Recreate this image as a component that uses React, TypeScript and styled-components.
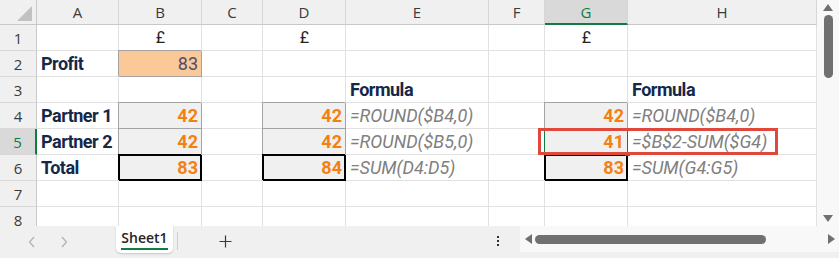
import React from 'react';
import styled, { createGlobalStyle, css } from 'styled-components';

const Global = createGlobalStyle`
  html, body { margin: 0; padding: 0; background: #fff; }
  body { width: 839px; height: 258px; overflow: hidden; font-family: "Open Sans", "Noto Sans", sans-serif; }
  * { box-sizing: border-box; }
`;

type Kind = 'plain' | 'currency' | 'label' | 'heading' | 'profit' | 'num' | 'total' | 'formula';
type CellData = { text: string; kind: Kind; selected?: boolean };

const COLS = ['A', 'B', 'C', 'D', 'E', 'F', 'G', 'H'];
const ROW_COUNT = 8;
const ACTIVE_COL = 'G';
const ACTIVE_ROW = 5;
const GREEN = '#107c41';

const SHEET: Record<number, Record<string, CellData>> = {
  1: {
    B: { text: '£', kind: 'currency' },
    D: { text: '£', kind: 'currency' },
    G: { text: '£', kind: 'currency' },
  },
  2: {
    A: { text: 'Profit', kind: 'label' },
    B: { text: '83', kind: 'profit' },
  },
  3: {
    E: { text: 'Formula', kind: 'heading' },
    H: { text: 'Formula', kind: 'heading' },
  },
  4: {
    A: { text: 'Partner 1', kind: 'label' },
    B: { text: '42', kind: 'num' },
    D: { text: '42', kind: 'num' },
    E: { text: '=ROUND($B4,0)', kind: 'formula' },
    G: { text: '42', kind: 'num' },
    H: { text: '=ROUND($B4,0)', kind: 'formula' },
  },
  5: {
    A: { text: 'Partner 2', kind: 'label' },
    B: { text: '42', kind: 'num' },
    D: { text: '42', kind: 'num' },
    E: { text: '=ROUND($B5,0)', kind: 'formula' },
    G: { text: '41', kind: 'num', selected: true },
    H: { text: '=$B$2-SUM($G4)', kind: 'formula' },
  },
  6: {
    A: { text: 'Total', kind: 'label' },
    B: { text: '83', kind: 'total' },
    D: { text: '84', kind: 'total' },
    E: { text: '=SUM(D4:D5)', kind: 'formula' },
    G: { text: '83', kind: 'total' },
    H: { text: '=SUM(G4:G5)', kind: 'formula' },
  },
};

// Grid track index of a sheet column / row (track 1 holds the headers)
const colTrack = (c: string) => COLS.indexOf(c) + 2;
const rowTrack = (r: number) => r + 1;

const Window = styled.div`
  width: 839px;
  height: 258px;
  display: flex;
  flex-direction: column;
  background: #f0f0f0;
  overflow: hidden;
`;

const Body = styled.div`
  display: flex;
  flex: 0 0 226px;
  height: 226px;
`;

const Grid = styled.div`
  flex: 0 0 817px;
  display: grid;
  grid-template-columns: 37px 82px 83px 61px 83px 143px 56px 83px 189px;
  grid-template-rows: 25px repeat(8, 26px);
  overflow: hidden;
  background: #fff;
`;

const Placed = css<{ $row: number; $col: number }>`
  grid-row: ${(p) => p.$row};
  grid-column: ${(p) => p.$col};
`;

const Corner = styled.div`
  grid-row: 1;
  grid-column: 1;
  background: #f0f0f0;
  border-right: 1px solid #c8c8c8;
  border-bottom: 1px solid #c8c8c8;
  display: flex;
  align-items: flex-end;
  justify-content: flex-end;
  padding: 0 4px 3px 0;
`;

const Triangle = styled.div`
  width: 0;
  height: 0;
  border-left: 15px solid transparent;
  border-bottom: 15px solid #c1c1c1;
`;

const ColHead = styled.div<{ $row: number; $col: number; $active?: boolean }>`
  ${Placed}
  display: flex;
  align-items: center;
  justify-content: center;
  font-size: 15px;
  color: #3a3a3a;
  background: #f0f0f0;
  border-right: 1px solid #d6d6d6;
  border-bottom: 1px solid #c8c8c8;
  ${(p) =>
    p.$active &&
    css`
      background: #d9d9d9;
      color: ${GREEN};
      border-bottom: 2px solid ${GREEN};
    `}
`;

const RowHead = styled.div<{ $row: number; $col: number; $active?: boolean }>`
  ${Placed}
  display: flex;
  align-items: center;
  justify-content: center;
  font-size: 15px;
  color: #3a3a3a;
  background: #f0f0f0;
  border-right: 1px solid #c8c8c8;
  border-bottom: 1px solid #d9d9d9;
  ${(p) =>
    p.$active &&
    css`
      background: #d9d9d9;
      color: ${GREEN};
      border-right: 2px solid ${GREEN};
    `}
`;

const kindStyles: Record<Kind, ReturnType<typeof css>> = {
  plain: css``,
  currency: css`
    justify-content: center;
    font-size: 16px;
    color: #222;
  `,
  label: css`
    font-weight: 700;
    letter-spacing: -0.5px;
    color: #15284a;
  `,
  heading: css`
    font-weight: 700;
    letter-spacing: -0.5px;
    color: #15284a;
  `,
  profit: css`
    justify-content: flex-end;
    background: #fac997;
    color: #55496c;
    border-right-color: #a3a3a3;
    border-bottom-color: #a3a3a3;
    box-shadow: -1px -1px 0 0 #a3a3a3;
  `,
  num: css`
    justify-content: flex-end;
    font-weight: 700;
    color: #f4800f;
    background: #f0f0f0;
    border-right-color: #a3a3a3;
    border-bottom-color: #a3a3a3;
    box-shadow: -1px -1px 0 0 #a3a3a3;
  `,
  total: css`
    justify-content: flex-end;
    font-weight: 700;
    color: #f4800f;
    background: #f0f0f0;
    border-right-color: #000;
    border-bottom-color: #000;
    box-shadow: -1px -1px 0 0 #000, inset 1px 1px 0 0 #000, inset -1px -1px 0 0 #000;
  `,
  formula: css`
    font-style: italic;
    color: #808080;
  `,
};

const Cell = styled.div<{ $row: number; $col: number; $kind: Kind; $selected?: boolean }>`
  ${Placed}
  position: relative;
  display: flex;
  align-items: center;
  padding: 0 3px 0 4px;
  font-family: Roboto, "Open Sans", sans-serif;
  font-size: 18px;
  white-space: nowrap;
  border-right: 1px solid #e1e1e1;
  border-bottom: 1px solid #e1e1e1;
  ${(p) => kindStyles[p.$kind]}
  ${(p) =>
    p.$selected &&
    css`
      z-index: 1;
      box-shadow: -1px 0 0 0 ${GREEN};
      border-right-color: ${GREEN};
      &::after {
        content: '';
        position: absolute;
        right: -3px;
        bottom: -2px;
        width: 5px;
        height: 4px;
        background: ${GREEN};
      }
    `}
`;

// Red call-out box drawn over G5:H5
const Callout = styled.div`
  grid-row: ${rowTrack(5)};
  grid-column: ${colTrack('G')} / ${colTrack('H') + 1};
  align-self: start;
  justify-self: start;
  margin: -1px 0 0 -7px;
  width: 240px;
  height: 27px;
  border: 3px solid #e0483b;
  z-index: 3;
  pointer-events: none;
`;

const VScroll = styled.div`
  flex: 1;
  background: #f8f8f8;
  display: flex;
  flex-direction: column;
  align-items: center;
  padding: 4px 0;
`;

const VThumb = styled.div`
  width: 9px;
  height: 63px;
  margin-top: 4px;
  border-radius: 5px;
  background: #707070;
`;

const Spacer = styled.div`
  flex: 1;
`;

const TabBar = styled.div`
  flex: 1;
  display: flex;
  align-items: flex-start;
  background: #f0f0f0;
`;

const NavButtons = styled.div`
  width: 116px;
  height: 32px;
  display: flex;
  align-items: center;
  gap: 24px;
  padding-left: 28px;
`;

const SheetTab = styled.div`
  width: 57px;
  height: 27px;
  background: #fff;
  border-radius: 0 0 5px 5px;
  box-shadow: 0 1px 2px rgba(0, 0, 0, 0.18);
  display: flex;
  flex-direction: column;
  align-items: center;
  padding-top: 3px;
  font-size: 14px;
  font-weight: 600;
  color: #242424;
`;

const TabLabel = styled.span`
  line-height: 17px;
  padding-bottom: 2px;
  border-bottom: 2px solid ${GREEN};
`;

const Divider = styled.div`
  width: 1px;
  height: 18px;
  margin: 6px 0 0 4px;
  background: #cfcfcf;
`;

const AddButton = styled.div`
  width: 94px;
  height: 32px;
  display: flex;
  align-items: center;
  justify-content: center;
  padding-bottom: 2px;
`;

const Dots = styled.div`
  width: 24px;
  height: 32px;
  display: flex;
  flex-direction: column;
  align-items: center;
  justify-content: center;
  gap: 2px;
  margin-right: 10px;
  padding-bottom: 2px;
  & > span {
    width: 2px;
    height: 2px;
    background: #333;
  }
`;

const HScroll = styled.div`
  width: 319px;
  height: 26px;
  background: #f8f8f8;
  display: flex;
  align-items: center;
  padding: 0 4px 0 5px;
  gap: 3px;
`;

const HThumb = styled.div`
  width: 231px;
  height: 9px;
  border-radius: 5px;
  background: #707070;
`;

const Arrow = ({ dir }: { dir: 'up' | 'down' | 'left' | 'right' }) => {
  const pts = {
    up: '0,7 5,0 10,7',
    down: '0,0 10,0 5,7',
    left: '7,0 7,10 0,5',
    right: '0,0 0,10 7,5',
  }[dir];
  const horiz = dir === 'left' || dir === 'right';
  return (
    <svg width={horiz ? 7 : 10} height={horiz ? 10 : 7} viewBox={horiz ? '0 0 7 10' : '0 0 10 7'}>
      <polygon points={pts} fill="#707070" />
    </svg>
  );
};

const Chevron = ({ dir }: { dir: 'left' | 'right' }) => (
  <svg width="8" height="12" viewBox="0 0 8 12">
    <polyline
      points={dir === 'left' ? '6,1 1.5,6 6,11' : '2,1 6.5,6 2,11'}
      fill="none"
      stroke="#b3b3b3"
      strokeWidth="1.3"
    />
  </svg>
);

const Plus = () => (
  <svg width="13" height="13" viewBox="0 0 13 13">
    <path d="M6.5 0.5v12M0.5 6.5h12" stroke="#3a3a3a" strokeWidth="1.2" fill="none" />
  </svg>
);

export default function App() {
  const rowNumbers = Array.from({ length: ROW_COUNT }, (_, i) => i + 1);
  return (
    <>
      <Global />
      <Window>
        <Body>
          <Grid>
            <Corner>
              <Triangle />
            </Corner>
            {COLS.map((c) => (
              <ColHead key={c} $row={1} $col={colTrack(c)} $active={c === ACTIVE_COL}>
                {c}
              </ColHead>
            ))}
            {rowNumbers.map((r) => (
              <React.Fragment key={r}>
                <RowHead $row={rowTrack(r)} $col={1} $active={r === ACTIVE_ROW}>
                  {r}
                </RowHead>
                {COLS.map((c) => {
                  const cell = SHEET[r]?.[c];
                  return (
                    <Cell
                      key={c}
                      $row={rowTrack(r)}
                      $col={colTrack(c)}
                      $kind={cell?.kind ?? 'plain'}
                      $selected={cell?.selected}
                    >
                      {cell?.text}
                    </Cell>
                  );
                })}
              </React.Fragment>
            ))}
            <Callout />
          </Grid>
          <VScroll>
            <Arrow dir="up" />
            <VThumb />
            <Spacer />
            <Arrow dir="down" />
          </VScroll>
        </Body>
        <TabBar>
          <NavButtons>
            <Chevron dir="left" />
            <Chevron dir="right" />
          </NavButtons>
          <SheetTab>
            <TabLabel>Sheet1</TabLabel>
          </SheetTab>
          <Divider />
          <AddButton>
            <Plus />
          </AddButton>
          <Spacer />
          <Dots>
            <span />
            <span />
            <span />
          </Dots>
          <HScroll>
            <Arrow dir="left" />
            <HThumb />
            <Spacer />
            <Arrow dir="right" />
          </HScroll>
        </TabBar>
      </Window>
    </>
  );
}
